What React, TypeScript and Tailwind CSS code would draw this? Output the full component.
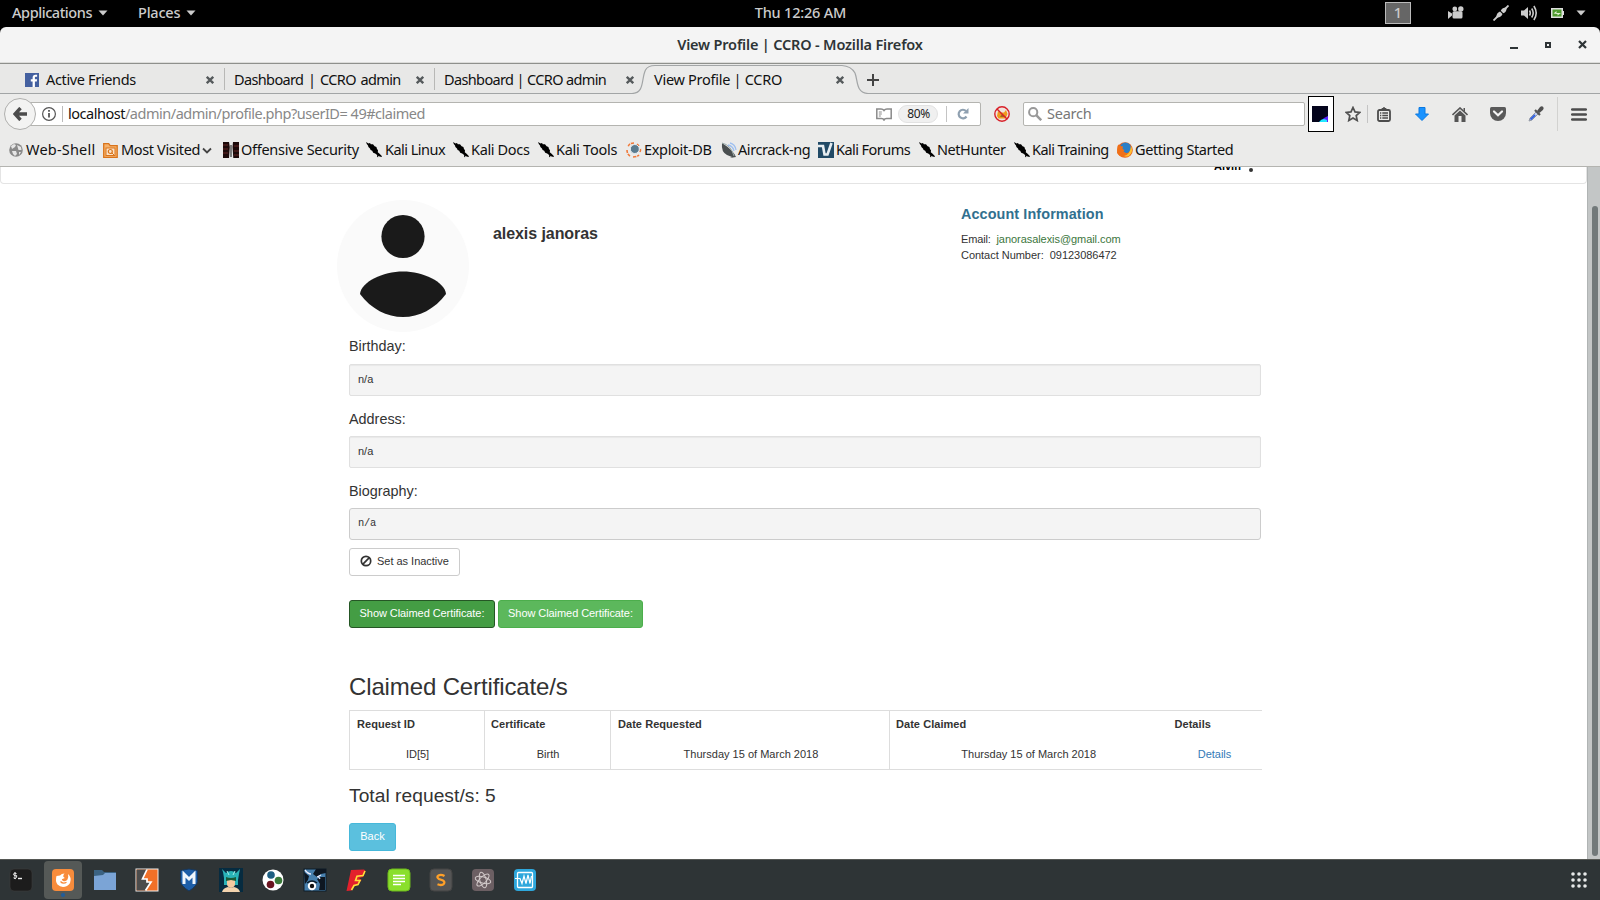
import React from "react";

const caret = (
  <svg width="10" height="6" viewBox="0 0 10 6" className="shrink-0">
    <path d="M0.5 0.5h9L5 5.5z" fill="currentColor" />
  </svg>
);

function TopBar() {
  return (
    <header className="grid h-[27px] grid-cols-3 items-center bg-black pb-[1px] text-[14.5px] font-medium text-[#ccc]">
      <div className="flex items-center pl-3">
        <span className="flex w-[126px] items-center gap-[6px] tracking-[-0.43px]">
          <span className="pb-[2px]">Applications</span>
          {caret}
        </span>
        <span className="flex items-center gap-[6px] tracking-[-0.2px]">
          <span className="pb-[2px]">Places</span>
          {caret}
        </span>
      </div>
      <div className="pb-[2px] pl-[1px] text-center tracking-[-0.2px]">Thu 12:26 AM</div>
      <div className="flex items-center justify-end pr-[15px]">
        <span className="mr-[37px] flex h-[22px] w-[26px] items-center justify-center border border-[#bbb] bg-[#666] pb-[2px]">1</span>
        <svg width="16" height="14" viewBox="0 0 16 14" className="mr-[29px]" fill="#ccc">
          <path d="M0 5l4 2.500v2L0 13z" />
          <circle cx="6.800" cy="3" r="2.400" />
          <circle cx="12.800" cy="3" r="2.700" />
          <rect x="4.500" y="5.200" width="10" height="7.300" rx="1.500" />
        </svg>
        <svg width="16" height="16" viewBox="0 0 16 16" className="mr-3">
          <path d="M0.500 15.500L5 11M11 5l4.500-4.500" stroke="#ccc" strokeWidth="1.800" />
          <path d="M3.500 12.500c-.5-3 1-5 3.500-6l2.500 2.500c-1 2.500-3 4-6 3.500zM7.800 5.800c1-2.500 3-3.500 5.800-3.400.2 3-.9 4.800-3.300 5.900z" fill="#ccc" />
        </svg>
        <svg width="17" height="16" viewBox="0 0 17 16" className="mr-[13px]" fill="none" stroke="#ccc" strokeWidth="1.600">
          <path d="M0 5.500h3L7 2v12L3 10.500H0z" fill="#ccc" stroke="none" />
          <path d="M8.500 5.500q1.500 2.500 0 5M10.700 3.500q3 4.500 0 9M12.900 1q4.600 7 0 14" />
        </svg>
        <svg width="13" height="10" viewBox="0 0 13 10" className="mr-3">
          <rect x=".75" y=".75" width="10.500" height="8.500" fill="#4e9a2e" stroke="#ddd" strokeWidth="1.500" />
          <rect x="11.500" y="3" width="1.500" height="4" fill="#ddd" />
          <path d="M2.500 5.500L5.500 3v2H10L6.500 7.500V6z" fill="#dff0d0" />
        </svg>
        <span className="-mr-[1px] flex">{caret}</span>
      </div>
    </header>
  );
}

function TitleBar() {
  return (
    <div className="bg-black">
      <div className="grid h-[37px] grid-cols-[1fr_auto_1fr] items-center rounded-t-[6px] border-b border-[#8e908c] bg-[#f4f4f4] shadow-[inset_0_-1px_0_#dcdcda]">
        <span />
        <span className="pb-[3px] text-[14.5px] font-semibold tracking-[-0.18px] text-[#2e3436]">View Profile | CCRO - Mozilla Firefox</span>
        <div className="flex items-center justify-end pr-[13px] pb-[1px]">
          <svg width="8" height="12" viewBox="0 0 8 12"><rect y="8" width="8" height="2" fill="#2e3436" /></svg>
          <svg width="6" height="6" viewBox="0 0 6 6" className="ml-[27px]"><rect x="1" y="1" width="4" height="4" fill="none" stroke="#2e3436" strokeWidth="2" /></svg>
          <svg width="9" height="9" viewBox="0 0 9 9" className="ml-[27px]"><path d="M1 1l7 7M8 1L1 8" stroke="#2e3436" strokeWidth="2.200" /></svg>
        </div>
      </div>
    </div>
  );
}

const TabClose = () => (
  <svg width="8" height="8" viewBox="0 0 8 8" className="mt-[1px] shrink-0"><path d="M.8.8l6.400 6.400M7.200.8L.8 7.200" stroke="#555a5c" strokeWidth="2.300" /></svg>
);

function Tabs() {
  return (
    <div className="relative flex h-[30px] items-center bg-[#e8e8e7] text-[14.5px] text-[#111]">
      <svg width="1600" height="30" viewBox="0 0 1600 30" className="absolute left-0 top-0">
        <path d="M632 30C645 29 641 15 645.500 6Q648 1.500 655 1.500H842Q851 2 854 9C857 17 855 29 867 29.500V30z" fill="#ebebea" />
        <path d="M0 29.500H632C645 29 641 15 645.500 6Q648 1.500 655 1.500H842Q851 2 855 9C858 17 856 29 868 29.500H1600" fill="none" stroke="#a2a5a6" strokeWidth="1.200" />
      </svg>
      <div className="relative flex h-full items-center">
        <div className="flex w-[224px] items-center pl-[25px] pr-[10px]">
          <svg width="14" height="14" viewBox="0 0 14 14" className="mr-[7px] mt-[1px]">
            <rect width="14" height="14" fill="#4460a0" />
            <path d="M7.600 14V8.500H5.800V6.300h1.800V4.700c0-1.900 1.100-2.900 2.800-2.900h1.700v2h-1.200c-.8 0-1 .4-1 1v1.500h2.200L11.800 8.500H9.900V14z" fill="#fff" />
          </svg>
          <span className="flex-1 whitespace-nowrap tracking-[-0.35px]">Active Friends</span>
          <TabClose />
        </div>
        <div className="flex h-[22px] w-[210px] items-center border-l border-[#b8b8b6] pl-[9px] pr-[10px]">
          <span className="flex-1 whitespace-nowrap tracking-[-0.63px] [word-spacing:1.500px]">Dashboard | CCRO admin</span>
          <TabClose />
        </div>
        <div className="flex h-[22px] w-[210px] items-center border-l border-[#b8b8b6] pl-[9px] pr-[10px]">
          <span className="flex-1 whitespace-nowrap tracking-[-0.63px]">Dashboard | CCRO admin</span>
          <TabClose />
        </div>
        <div className="flex w-[210px] items-center pl-[10px] pr-[10px]">
          <span className="flex-1 whitespace-nowrap tracking-[-0.28px]">View Profile | CCRO</span>
          <TabClose />
        </div>
        <svg width="12" height="12" viewBox="0 0 12 12" className="ml-[13px] mt-[1px]"><path d="M6 0v12M0 6h12" stroke="#444" strokeWidth="2" /></svg>
      </div>
    </div>
  );
}

function NavBar() {
  return (
    <div className="flex h-[41px] items-center bg-[#ebebea] pb-[1px] text-[14.5px]">
      <div className="relative z-10 ml-1 flex size-8 shrink-0 items-center justify-center rounded-full border border-[#b0b0ae] bg-[#f3f3f2]">
        <svg width="14" height="14" viewBox="0 0 14 14"><path d="M7.500 1L2 7l5.500 6M2.500 7H14" stroke="#4c4c4c" strokeWidth="3.400" fill="none" /></svg>
      </div>
      <div className="-ml-[6px] flex h-6 w-[951px] items-center rounded-r-[2px] border border-[#b4b4b0] bg-white pl-[11px] pr-[11px]">
        <svg width="14" height="14" viewBox="0 0 14 14" fill="none" stroke="#555" className="mr-[6px]">
          <circle cx="7" cy="7" r="6.400" strokeWidth="1.200" /><path d="M7 6v4.500M7 3v1.700" strokeWidth="1.800" />
        </svg>
        <span className="mr-[5px] h-4 w-px bg-[#bbb]" />
        <span className="flex-1 whitespace-nowrap pb-[2px] tracking-[-0.48px] text-[#888]"><span className="text-[#111]">localhost</span>/admin/admin/profile.php?userID= 49#claimed</span>
        <svg width="16" height="13" viewBox="0 0 16 13" fill="none" stroke="#8a8a8a" strokeWidth="1.500" className="mr-[6px]">
          <path d="M8 2.500Q7 1 5 1H.8v9.500H5.500Q7.500 10.500 8 12q.5-1.500 2.500-1.500h4.700V1H11Q9 1 8 2.500z" /><path d="M2.800 4h3M2.800 6h3M2.800 8h2" strokeWidth="1" />
        </svg>
        <span className="mr-2 flex h-[18px] w-10 items-center justify-center rounded-full border border-[#e2e2e2] bg-[#f0f0f0] pl-[1px] text-[12px] tracking-[-0.4px] text-[#222]">80%</span>
        <span className="mr-[10px] h-4 w-px bg-[#c4c4c4]" />
        <svg width="12" height="12" viewBox="0 0 12 12"><path d="M9.500 8.500A4.300 4.300 0 1 1 9 3" fill="none" stroke="#8fa0b0" strokeWidth="2.200" /><path d="M11.500 0v5.500H6z" fill="#8fa0b0" /></svg>
      </div>
      <svg width="16" height="16" viewBox="0 0 16 16" className="ml-[13px] shrink-0">
        <circle cx="8" cy="8" r="7.300" fill="#f0e4dc" /><path d="M3 10l1-5 2 1.500h4L12 4l1.500 4-2 4.500h-7z" fill="#ef9a1c" /><path d="M6 11l2-3 4 3z" fill="#9a6a20" />
        <circle cx="8" cy="8" r="7.200" fill="none" stroke="#d8202a" strokeWidth="1.400" /><path d="M3 3l10 10" stroke="#d8202a" strokeWidth="1.400" />
      </svg>
      <div className="ml-[13px] flex h-6 w-[282px] shrink-0 items-center rounded-[2px] border border-[#b4b4b0] bg-white pl-1">
        <svg width="14" height="14" viewBox="0 0 14 14" fill="none" stroke="#999"><circle cx="5.200" cy="5.200" r="4.100" strokeWidth="2" /><path d="M8.200 8.200l5 5" strokeWidth="2.500" /></svg>
        <span className="ml-[5px] pb-[2px] tracking-[-0.25px] text-[#777]">Search</span>
      </div>
      <div className="ml-[3px] flex h-9 w-[26px] shrink-0 items-center justify-center border border-black bg-white">
        <svg width="16" height="16" viewBox="0 0 16 16" className="-ml-[2px]"><rect width="16" height="16" fill="#04041c" /><path d="M9 15l3-3 4-2v6H9z" fill="#5a20ff" /><path d="M7 16q2-3 5-3l3 1v2z" fill="#20e8ff" /></svg>
      </div>
      <svg width="16" height="16" viewBox="0 0 16 16" className="ml-[11px] shrink-0"><path d="M8 1.500l2 4.400 4.800.5-3.600 3.200 1 4.900L8 12l-4.200 2.500 1-4.900L1.200 6.400 6 5.900z" fill="none" stroke="#505050" strokeWidth="1.700" /></svg>
      <span className="ml-[6px] h-[18px] w-px bg-[#c4c4c4]" />
      <svg width="14" height="15" viewBox="0 0 14 15" className="ml-[9px] shrink-0" fill="none" stroke="#4c4c4c"><rect x="1" y="3" width="12" height="11" rx="1.500" strokeWidth="1.800" /><path d="M4 2.500L7 .5l3 2z" fill="#4c4c4c" /><path d="M3 6h1.300M5.300 6H11M3 8.500h1.300M5.300 8.500H11M3 11h1.300M5.300 11H11" strokeWidth="1.300" /></svg>
      <svg width="14" height="14" viewBox="0 0 14 14" className="ml-6 shrink-0"><path d="M4 .5h6V7h3.500L7 13.500.5 7H4z" fill="#1a93ff" stroke="#0a78e0" /></svg>
      <svg width="16" height="15" viewBox="0 0 16 15" className="ml-[23px] shrink-0" fill="#555"><path d="M.5 8L8 1l7.500 7" fill="none" stroke="#555" strokeWidth="1.600" /><path d="M2.500 8.500L8 3.500l5.500 5V15h-4V9h-3v6h-4zM11.500 1H13v4l-1.500-1.500z" /></svg>
      <svg width="16" height="14" viewBox="0 0 16 14" className="ml-[22px] shrink-0"><path d="M1.500 0h13Q16 0 16 1.500V6a8 8 0 0 1-16 0V1.500Q0 0 1.500 0z" fill="#5a5a5a" /><path d="M4 4.500l4 3.700 4-3.700" stroke="#f4f4f4" strokeWidth="2.200" fill="none" strokeLinecap="round" /></svg>
      <svg width="16" height="16" viewBox="0 0 16 16" className="ml-[22px] shrink-0"><path d="M1 15l1-3 6.500-6.500 2 2L4 14z" fill="#c4d0f0" stroke="#9298a4" /><path d="M2.500 13.500l4.500-4.500" stroke="#3060e0" strokeWidth="1.800" /><path d="M7 4l5 5" stroke="#555" strokeWidth="2.200" /><path d="M9 5l3-4q2-1.500 3.200 0 1 1.500-.3 3l-3.500 3z" fill="#505050" /></svg>
      <span className="ml-[13px] h-[34px] w-px bg-[#d2d2d0]" />
      <svg width="16" height="13" viewBox="0 0 16 13" className="ml-[13px] shrink-0"><path d="M1.200 1.500h13.600M1.200 6.500h13.600M1.200 11.500h13.600" stroke="#4c4c4c" strokeWidth="2.600" strokeLinecap="round" /></svg>
    </div>
  );
}

const Dragon = () => (
  <svg width="16" height="16" viewBox="0 0 16 16" className="shrink-0"><path d="M0 0l2.500 1.600L4 1l.8 1.300L7 2.300l1.600 2 1.800.6.6 2.100 1 1.300-.2 2 1.800 1.500 2.400 2.500-.6.800-2.500-.8-.6-.6-.2 1.600-.9-.3-.1-2-1.900-1.400-2-.8-1-2-1.600-.8-.6-1.600-1.600-1.300-.4-1.500L.8 2z" fill="#000" /></svg>
);
const Globe = () => (
  <svg width="14" height="14" viewBox="0 0 14 14"><circle cx="7" cy="7" r="6.800" fill="#8a8a8a" /><path d="M2 3l3-2 2 1-1 2-3 2zM8 2l4 2 .5 3-3 0zM3 8l4 0 1 3-2 2-2-2zM10 9l2 0-2 3z" fill="#e6e6e6" /></svg>
);
const FolderFeed = () => (
  <svg width="15" height="15" viewBox="0 0 15 15"><path d="M.7.7h5l1.500 2h7v11.600H.7z" fill="#f6b26b" stroke="#d9741c" strokeWidth="1.300" /><rect x="3" y="5" width="9" height="7.500" fill="#fbe3c8" stroke="#d9741c" /><circle cx="7.300" cy="8.500" r="2" fill="none" stroke="#d9741c" strokeWidth="1.200" /><path d="M9 10l2 2" stroke="#d9741c" /></svg>
);
const OffSec = () => (
  <svg width="16" height="16" viewBox="0 0 16 16"><rect width="16" height="16" fill="#1d0a0a" /><path d="M0 3h5M0 7h5M0 11h5M11 4h5M11 9h5M11 13h5" stroke="#4c1c1c" strokeWidth="1.500" /><path d="M6 0h4l-.5 5 .8 11H6l.8-11z" fill="#e8e8e8" /><path d="M7.500 3h1v12h-1z" fill="#111" /></svg>
);
const Exploit = () => (
  <svg width="16" height="16" viewBox="0 0 16 16"><path d="M8 1Q3 1 2 5M1 8q0 4 3 6M7 15q4 0 6-2M14 10q1-2 0-4M13 4l-2-2" fill="none" stroke="#f07838" strokeWidth="1.600" strokeDasharray="3 1" /><circle cx="8.800" cy="7" r="4.500" fill="#5b7c90" stroke="#e8eef2" /></svg>
);
const Dish = () => (
  <svg width="16" height="16" viewBox="0 0 16 16"><path d="M1 1q-1 9 5 12l5 2-2 1 6-1Q12 8 1 1z" fill="#4a4f50" /><path d="M1 1q9 2 12 13" stroke="#9aa" fill="none" /><path d="M7 3q5 1 6 6M9 1q5 1 6 7" stroke="#9fc0f0" strokeWidth="1.300" fill="none" /></svg>
);
const Forum = () => (
  <svg width="16" height="16" viewBox="0 0 16 16"><rect width="16" height="16" fill="#214a66" /><path d="M0 4h5l1.500 8.500h3L13.500 1" fill="none" stroke="#e8eef2" strokeWidth="2.600" /></svg>
);
const Fox = () => (
  <svg width="16" height="16" viewBox="0 0 16 16"><circle cx="8" cy="8" r="7.800" fill="#e8601c" /><circle cx="8.500" cy="6" r="5.500" fill="#2a7fc8" /><path d="M.5 4L1.500 2.500 3 4l3 .5-.5 2.500 2 1-1 1.500 2.500 1.500q3 .5 4.500-2 0 4-4 5.500-6 2-9.500-3.500z" fill="#f07018" /><path d="M14 4q3 6-2 10-3 1-5 0 6-1 7-10z" fill="#ffc030" /></svg>
);

function Bookmarks() {
  return (
    <div className="flex h-8 items-center border-b border-[#b4b4b0] bg-[#ebebea] pb-[1px] pl-[9px] text-[14.5px] whitespace-nowrap text-[#111]">
      <div className="flex w-[94px] shrink-0 items-center gap-[3px]"><Globe /><span className="pb-[2px] tracking-[0.2px]">Web-Shell</span></div>
      <div className="flex w-[120px] shrink-0 items-center gap-[3px]">
        <FolderFeed /><span className="pb-[2px] tracking-[-0.35px]">Most Visited</span>
        <svg width="10" height="7" viewBox="0 0 10 7" className="-ml-[1px]"><path d="M1 1.500l4 4 4-4" stroke="#444" strokeWidth="1.800" fill="none" /></svg>
      </div>
      <div className="flex w-[143px] shrink-0 items-center gap-[2px]"><OffSec /><span className="pb-[2px] tracking-[-0.28px]">Offensive Security</span></div>
      <div className="flex w-[87px] shrink-0 items-center gap-[3px]"><Dragon /><span className="pb-[2px] tracking-[-0.52px]">Kali Linux</span></div>
      <div className="flex w-[85px] shrink-0 items-center gap-[2px]"><Dragon /><span className="pb-[2px] tracking-[-0.35px]">Kali Docs</span></div>
      <div className="flex w-[88px] shrink-0 items-center gap-[2px]"><Dragon /><span className="pb-[2px] tracking-[-0.25px]">Kali Tools</span></div>
      <div className="flex w-[95px] shrink-0 items-center gap-[2px]"><Exploit /><span className="pb-[2px] tracking-[-0.32px]">Exploit-DB</span></div>
      <div className="flex w-[97px] shrink-0 items-center gap-[1px]"><Dish /><span className="pb-[2px] tracking-[-0.4px]">Aircrack-ng</span></div>
      <div className="flex w-[101px] shrink-0 items-center gap-[2px]"><Forum /><span className="pb-[2px] tracking-[-0.55px]">Kali Forums</span></div>
      <div className="flex w-[95px] shrink-0 items-center gap-[2px]"><Dragon /><span className="pb-[2px] tracking-[-0.45px]">NetHunter</span></div>
      <div className="flex w-[103px] shrink-0 items-center gap-[2px]"><Dragon /><span className="pb-[2px] tracking-[-0.55px]">Kali Training</span></div>
      <div className="flex shrink-0 items-center gap-[2px]"><Fox /><span className="pb-[2px] tracking-[-0.4px]">Getting Started</span></div>
    </div>
  );
}

function Page() {
  return (
    <div className="flex h-[692px] bg-white font-['Liberation_Sans',Arial,sans-serif] text-[11px] leading-4 text-[#333]">
      <main className="h-full w-[1587px] overflow-hidden">
        <div className="flex h-[17px] items-start overflow-hidden rounded-b-[4px] border border-t-0 border-[#e4e4e4] pl-[1213px] font-bold text-black">
          <span className="-mt-[9px]">Alvin</span>
          <span className="ml-[8px] mt-[1px] size-1 rounded-full bg-[#333]" />
        </div>
        <div className="ml-[349px] w-[912px]">
          <section className="flex h-[148px] pt-4">
            <svg width="132" height="132" viewBox="0 0 132 132" className="-ml-3 shrink-0">
              <circle cx="66" cy="66" r="66" fill="#fafafa" />
              <circle cx="66" cy="36.500" r="21.600" fill="#1a1a1a" />
              <path d="M23 94C24 82 46 71.500 66 71.500S108 82 109 94C98 109 82 117 66 117S34 109 23 94z" fill="#1a1a1a" />
            </svg>
            <h4 className="ml-6 mt-6 w-[468px] text-[16px] leading-5 font-bold tracking-[-0.07px]">alexis janoras</h4>
            <div className="mt-[5px]">
              <h4 className="text-[14.4px] leading-[18px] font-bold tracking-[0.1px] text-[#31708f]">Account Information</h4>
              <p className="mt-[8px] whitespace-pre tracking-[-0.15px]">Email:  <span className="tracking-[-0.06px] text-[#3c763d]">janorasalexis@gmail.com</span></p>
              <p className="tracking-[-0.03px] whitespace-pre">Contact Number:  09123086472</p>
            </div>
          </section>
          <h4 className="flex h-8 items-center pb-[4px] text-[14.4px]">Birthday:</h4>
          <div className="flex h-8 items-center rounded-[2px] border border-[#e0e0e0] bg-[#f4f4f4] pb-[2px] pl-2 shadow-[inset_0_1px_1px_rgba(0,0,0,0.05)]">n/a</div>
          <h4 className="mt-2 flex h-8 items-center pb-[3px] text-[14.4px]">Address:</h4>
          <div className="flex h-8 items-center rounded-[2px] border border-[#e0e0e0] bg-[#f4f4f4] pb-[2px] pl-2 shadow-[inset_0_1px_1px_rgba(0,0,0,0.05)]">n/a</div>
          <h4 className="mt-2 flex h-8 items-center pb-[3px] text-[14.4px]">Biography:</h4>
          <pre className="flex h-8 items-center rounded-[3px] border border-[#ccc] bg-[#f4f4f4] pb-[3px] pl-2 font-['Liberation_Mono',monospace] text-[10.4px] tracking-[-0.2px]">n/a</pre>
          <button className="mt-2 flex h-7 w-[111px] items-center rounded-[3px] border border-[#ccc] bg-white pb-[2px] pl-[10px]">
            <svg width="12" height="12" viewBox="0 0 12 12" className="mr-[5px] -mt-[1px] shrink-0"><circle cx="6" cy="6" r="4.700" fill="none" stroke="#333" strokeWidth="1.700" /><path d="M2.700 9.300l6.600-6.600" stroke="#333" strokeWidth="1.700" /></svg>
            <span className="tracking-[-0.02px]">Set as Inactive</span>
          </button>
          <div className="mt-6 flex gap-[3px]">
            <button className="h-7 w-[146px] rounded-[3px] border border-[#255625] bg-[#449d44] pb-[2px] tracking-[-0.07px] text-white">Show Claimed Certificate:</button>
            <button className="h-7 w-[145px] rounded-[3px] border border-[#4cae4c] bg-[#5cb85c] pb-[2px] tracking-[-0.07px] text-white">Show Claimed Certificate:</button>
          </div>
          <h3 className="mt-[44px] h-[38px] text-[24px] leading-[30px] tracking-[-0.13px]">Claimed Certificate/s</h3>
          <table className="h-[60px] w-[912px] table-fixed border-collapse border-y border-[#ddd]">
            <colgroup><col className="w-[135px]" /><col className="w-[126px]" /><col className="w-[279px]" /><col className="w-[279px]" /><col className="w-[93px]" /></colgroup>
            <thead>
              <tr className="h-[28px] text-left tracking-[0.05px]">
                <th className="border-l border-[#ddd] pb-[2px] pl-[7px]">Request ID</th>
                <th className="border-l border-[#ddd] pb-[2px] pl-[6px]">Certificate</th>
                <th className="border-l border-[#ddd] pb-[2px] pl-[7px]">Date Requested</th>
                <th className="border-l border-[#ddd] pb-[2px] pl-[6px]">Date Claimed</th>
                <th className="pb-[2px] pl-[6px]">Details</th>
              </tr>
            </thead>
            <tbody>
              <tr className="h-[31px] text-center">
                <td className="border-l border-[#ddd] pl-[1px]">ID[5]</td>
                <td className="border-l border-[#ddd] pl-[1px]">Birth</td>
                <td className="border-l border-[#ddd] pl-[2px] tracking-[0.01px]">Thursday 15 of March 2018</td>
                <td className="border-l border-[#ddd] pr-[1px] tracking-[0.01px]">Thursday 15 of March 2018</td>
                <td className="pr-[1px] tracking-[-0.05px] text-[#337ab7]">Details</td>
              </tr>
            </tbody>
          </table>
          <h4 className="mt-[14px] h-[39px] text-[19.2px] leading-6 tracking-[0.04px]">Total request/s: 5</h4>
          <button className="h-7 w-[47px] rounded-[3px] border border-[#46b8da] bg-[#5bc0de] pb-[2px] text-white">Back</button>
        </div>
      </main>
      <div className="flex h-full w-[13px] flex-col items-center border-l border-[#b0b4b4] bg-[#c3c6c6] pt-[39px] pl-[1px]">
        <div className="h-[650px] w-[6px] rounded-full bg-[#72797a]" />
      </div>
    </div>
  );
}

const dockIcons: React.ReactNode[] = [
  <><rect x="1" y="1" width="22" height="22" rx="4" fill="#1c1c1c" stroke="#3c3c3c" strokeWidth=".6" /><path d="M7.500 5.500q-3-1-3 .7t2 1.200 1 2-3 .4M6 4v7" stroke="#eee" strokeWidth="1" fill="none" /><path d="M9 10.500h4" stroke="#eee" strokeWidth="1.400" /></>,
  <><rect x="1" y="1" width="22" height="22" rx="4" fill="#f88c3c" /><path d="M5.500 8q-1.500 5 1 8.500 4 4 9.500 1.500 4.500-3 3.500-8-.6-2.500-2.500-4 .8 3.500-.5 5.500-1.200 2-3.700 1.700-1.800-.4-2-2l3-1.200-1.500-1.200q-.3-1.800 1.200-3.300-3 0-4.500 2z" fill="#fff" /><path d="M9.500 13.500q2.500 3 6 .8" fill="none" stroke="#f88c3c" strokeWidth="1.200" /></>,
  <><path d="M1 2h8l2 2h12v18H1z" fill="#3b6282" /><path d="M1 8l9-1 2-2h11v17H1z" fill="#7ba4d6" /></>,
  <><rect x="1" y="1" width="22" height="22" fill="#f07028" stroke="#eee" /><path d="M1.500 1.500H12l-4.500 9.500H12v3h4l-5.500 8.500h-9z" fill="#4c4c4c" /><path d="M12 1.500l-4.500 9.500h4.500v3h4l-5.500 8.500" fill="none" stroke="#fff" strokeWidth="1.700" /></>,
  <><path d="M3.500 2.500L12 1l8.500 1.500v11Q20 18 12 23 4 18 3.500 13.500z" fill="#1d5ea8" stroke="#17375c" /><path d="M7 16V6l5 5 5-5v10" fill="none" stroke="#f0f6fc" strokeWidth="3" /></>,
  <><rect width="24" height="24" fill="#062b40" /><path d="M5 10L4 4 3 1l4 4q5-4 10 0l4-4-1 5-1 6v5H5z" fill="#2ab3b8" /><path d="M8 3l2 4M16 3l-2 4" stroke="#a8f0e8" strokeWidth="1" /><path d="M8 11h8v5q0 3-4 4-4-1-4-4z" fill="#f5c9a0" /><path d="M3 24q1-4 6-5l3 1 3-1q5 1 6 5z" fill="#f3d3ae" /><path d="M7 9q5 2 10 0v4l-5-1-5 1z" fill="#1a5a38" /></>,
  <><circle cx="12" cy="12" r="10.500" fill="#fff" /><circle cx="10" cy="7" r="3.800" fill="#1e5f82" /><circle cx="17.500" cy="12.500" r="3.800" fill="#3a7a3a" /><circle cx="9.500" cy="16.500" r="3.800" fill="#6a1420" /></>,
  <><rect x="1" y="1" width="22" height="22" fill="#4880ae" stroke="#0c1c28" /><path d="M13 1h10v4l-5 1-4 3-4-3zM22 9v13h-6l1-6-3-5 4-2zM1 4l5 4-1 4-3 4z" fill="#0e1722" /><path d="M2 2q3 4 6 4M14 9l4-2M15 8l2 3" stroke="#eef" strokeWidth="1.300" fill="none" /><circle cx="9" cy="18" r="3.200" fill="#111" stroke="#fff" strokeWidth="2" /><path d="M4 15q5-4 10 0" fill="none" stroke="#0c1c28" strokeWidth="1.500" /></>,
  <><path d="M6 2l13-.5 1.500 1.500-2.500 6-4 1 2.500 2-3.500 4.500-3 1-3.500 5-5 .5z" fill="#e3202c" /><path d="M20 3l-2 4.500-6 .8-1.500 4.200 4.500 0-2 4-4 1-2.500 4.500" fill="none" stroke="#ffe03a" strokeWidth="1.600" /></>,
  <><rect x="1" y="1" width="22" height="22" rx="4" fill="#8adf2c" stroke="#6cb81c" /><path d="M6 7.500h12M6 10.500h12M6 13.500h12M6 16.500h8" stroke="#fff" strokeWidth="1.300" /></>,
  <><rect x="1" y="1" width="22" height="22" rx="4" fill="#555" stroke="#444" /><path d="M15.500 8Q12 6 9.500 7.500T10 11l4 1.500q2.500 1.500.5 3.700-2.500 1.500-6 .1" fill="none" stroke="#ffa028" strokeWidth="2.300" /></>,
  <><rect x="1" y="1" width="22" height="22" rx="4" fill="#6c5f63" /><g fill="none" stroke="#d4cccc" strokeWidth="1"><ellipse cx="12" cy="12" rx="8" ry="3.200" transform="rotate(15 12 12)" /><ellipse cx="12" cy="12" rx="8" ry="3.200" transform="rotate(75 12 12)" /><ellipse cx="12" cy="12" rx="8" ry="3.200" transform="rotate(135 12 12)" /></g></>,
  <><rect x="1" y="1" width="22" height="22" rx="4" fill="#2ea7dc" /><rect x="4.500" y="4.500" width="15" height="15" rx="1" fill="none" stroke="#fff" strokeWidth="1.300" /><path d="M2 10.500h5l2 5L11 8l2 7.500L15 7l2 8.500L18.500 8" fill="none" stroke="#fff" strokeWidth="1.200" /></>,
];

function Dock() {
  return (
    <footer className="flex h-[41px] items-center justify-between border-t border-[#555753] bg-[#2e3436] pl-[2px] pr-[13px]">
      <div className="flex gap-1">
        {dockIcons.map((icon, i) => (
          <div key={i} className={i === 1 ? "relative flex h-[38px] w-[38px] items-center justify-center rounded-[4px] bg-[#555957]" : "flex h-[38px] w-[38px] items-center justify-center"}>
            <svg width="24" height="24" viewBox="0 0 24 24">{icon}</svg>
            {i === 1 && <span className="absolute bottom-[2px] left-[17px] size-1 rounded-full bg-[#215d9c]" />}
          </div>
        ))}
      </div>
      <svg width="16" height="16" viewBox="0 0 16 16" fill="#e8eaea">
        {[2, 8, 14].map((y) => [2, 8, 14].map((x) => <circle key={`${x}-${y}`} cx={x} cy={y} r="1.800" />))}
      </svg>
    </footer>
  );
}

export default function App() {
  return (
    <div className="flex h-[900px] w-[1600px] flex-col overflow-hidden bg-white font-['Noto_Sans','Open_Sans',sans-serif] leading-5">
      <TopBar />
      <TitleBar />
      <Tabs />
      <NavBar />
      <Bookmarks />
      <Page />
      <Dock />
    </div>
  );
}
